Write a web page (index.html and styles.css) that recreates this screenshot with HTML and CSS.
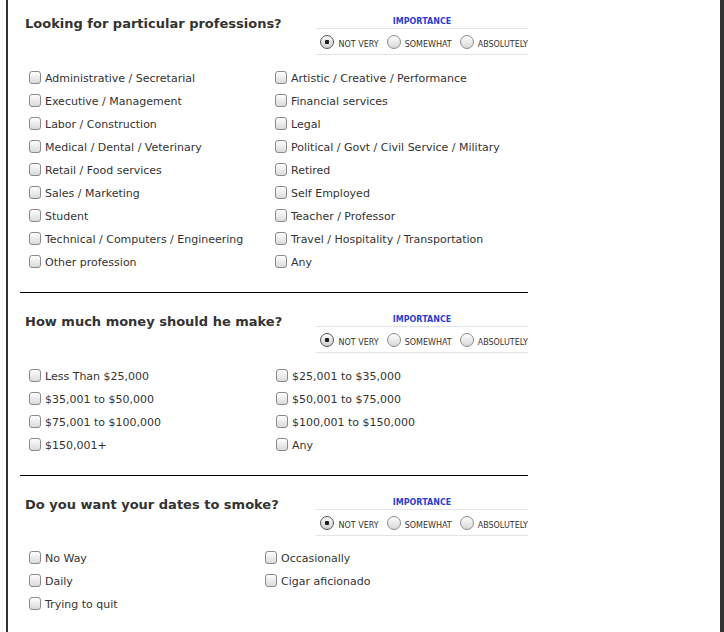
FILE: index.html
```html
<!DOCTYPE html>
<html lang="en">
  <head>
    <meta charset="UTF-8" />
    <title>Match Preferences</title>
    <link rel="stylesheet" href="styles.css">
  </head>
  <body>
    <div class="page">
      <div class="section">
        <div class="section-head">
          <h2>Looking for particular professions?</h2>
          <div class="importance">
            <div class="importance-label">IMPORTANCE</div>
            <div class="importance-options">
              <label><input type="radio" name="imp1" checked /><span>NOT VERY</span></label>
              <label><input type="radio" name="imp1" /><span>SOMEWHAT</span></label>
              <label><input type="radio" name="imp1" /><span>ABSOLUTELY</span></label>
            </div>
          </div>
        </div>
        <div class="choices choices-professions">
          <label><input type="checkbox" />Administrative / Secretarial</label>
          <label><input type="checkbox" />Artistic / Creative / Performance</label>
          <label><input type="checkbox" />Executive / Management</label>
          <label><input type="checkbox" />Financial services</label>
          <label><input type="checkbox" />Labor / Construction</label>
          <label><input type="checkbox" />Legal</label>
          <label><input type="checkbox" />Medical / Dental / Veterinary</label>
          <label><input type="checkbox" />Political / Govt / Civil Service / Military</label>
          <label><input type="checkbox" />Retail / Food services</label>
          <label><input type="checkbox" />Retired</label>
          <label><input type="checkbox" />Sales / Marketing</label>
          <label><input type="checkbox" />Self Employed</label>
          <label><input type="checkbox" />Student</label>
          <label><input type="checkbox" />Teacher / Professor</label>
          <label><input type="checkbox" />Technical / Computers / Engineering</label>
          <label><input type="checkbox" />Travel / Hospitality / Transportation</label>
          <label><input type="checkbox" />Other profession</label>
          <label><input type="checkbox" />Any</label>
        </div>
      </div>

      <div class="section">
        <div class="section-head">
          <h2>How much money should he make?</h2>
          <div class="importance">
            <div class="importance-label">IMPORTANCE</div>
            <div class="importance-options">
              <label><input type="radio" name="imp2" checked /><span>NOT VERY</span></label>
              <label><input type="radio" name="imp2" /><span>SOMEWHAT</span></label>
              <label><input type="radio" name="imp2" /><span>ABSOLUTELY</span></label>
            </div>
          </div>
        </div>
        <div class="choices choices-income">
          <label><input type="checkbox" />Less Than $25,000</label>
          <label><input type="checkbox" />$25,001 to $35,000</label>
          <label><input type="checkbox" />$35,001 to $50,000</label>
          <label><input type="checkbox" />$50,001 to $75,000</label>
          <label><input type="checkbox" />$75,001 to $100,000</label>
          <label><input type="checkbox" />$100,001 to $150,000</label>
          <label><input type="checkbox" />$150,001+</label>
          <label><input type="checkbox" />Any</label>
        </div>
      </div>

      <div class="section">
        <div class="section-head">
          <h2>Do you want your dates to smoke?</h2>
          <div class="importance">
            <div class="importance-label">IMPORTANCE</div>
            <div class="importance-options">
              <label><input type="radio" name="imp3" checked /><span>NOT VERY</span></label>
              <label><input type="radio" name="imp3" /><span>SOMEWHAT</span></label>
              <label><input type="radio" name="imp3" /><span>ABSOLUTELY</span></label>
            </div>
          </div>
        </div>
        <div class="choices choices-smoke">
          <label><input type="checkbox" />No Way</label>
          <label><input type="checkbox" />Occasionally</label>
          <label><input type="checkbox" />Daily</label>
          <label><input type="checkbox" />Cigar aficionado</label>
          <label><input type="checkbox" />Trying to quit</label>
        </div>
      </div>
    </div>
  </body>
</html>
```

FILE: styles.css
```css
* {
  margin: 0;
  padding: 0;
  box-sizing: border-box;
  font-family: "DejaVu Sans", Verdana, sans-serif;
}

body {
  background-color: white;
  color: #333;
}

.page {
  margin-left: 6px;
  width: 718px;
  min-height: 632px;
  border-left: 2px solid #333;
  border-right: 4px solid #333;
  padding-left: 12px;
}

.section {
  width: 508px;
  padding: 21px 0 18px;
  border-bottom: 1px solid #000;
}

.section:first-child {
  padding-top: 16px;
}

.section:last-child {
  border-bottom: none;
}

.section-head {
  display: flex;
  justify-content: space-between;
  align-items: flex-start;
}

h2 {
  padding-left: 5px;
  font-size: 13px;
  line-height: 16px;
  font-weight: bold;
  color: #333;
}

.importance {
  width: 212px;
}

.importance-label {
  text-align: center;
  font-size: 8px;
  line-height: 12px;
  font-weight: bold;
  color: #2a3fd0;
}

.importance-options {
  display: flex;
  justify-content: flex-end;
  align-items: flex-end;
  gap: 8px;
  height: 27px;
  padding-bottom: 5px;
  border-top: 1px solid #e4e4e4;
  border-bottom: 1px solid #e4e4e4;
}

.importance-options label {
  display: flex;
  align-items: flex-end;
  gap: 4px;
}

.importance-options span {
  font-size: 8px;
  line-height: 9px;
  color: #333;
}

input[type="radio"] {
  appearance: none;
  width: 14px;
  height: 14px;
  border: 1px solid #8c8c8c;
  border-radius: 50%;
  background: linear-gradient(#fdfdfd, #d8d8d8);
}

input[type="radio"]:checked {
  border-color: #555;
  background: radial-gradient(circle, #1c1c1c 0 2px, transparent 2.5px),
    linear-gradient(#fafafa, #cfcfcf);
}

.choices {
  display: grid;
  margin-top: 12px;
  padding-left: 9px;
}

.choices-professions {
  grid-template-columns: 246px auto;
}

.choices-income {
  grid-template-columns: 247px auto;
}

.choices-smoke {
  grid-template-columns: 236px auto;
  margin-top: 11px;
}

.choices label {
  display: flex;
  align-items: center;
  gap: 4px;
  height: 23px;
  font-size: 11px;
  color: #333;
}

input[type="checkbox"] {
  appearance: none;
  flex-shrink: 0;
  width: 12px;
  height: 13px;
  margin-top: -2px;
  border: 1px solid #8a8a8a;
  border-radius: 3px;
  background: linear-gradient(#fefefe, #dadada);
}
```
